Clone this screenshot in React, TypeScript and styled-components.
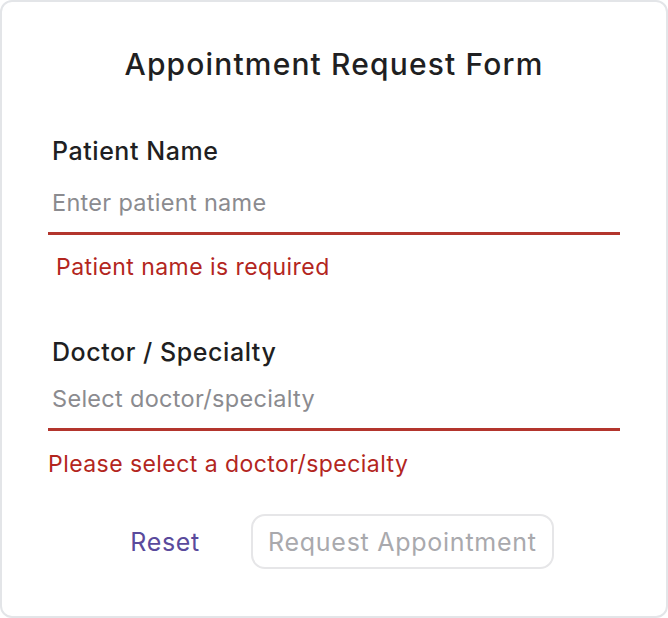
import React from 'react';
import styled, { createGlobalStyle } from 'styled-components';

const GlobalStyle = createGlobalStyle`
  * { box-sizing: border-box; }
  body {
    margin: 0;
    background: #ffffff;
    font-family: Inter, "Noto Sans", sans-serif;
  }
`;

const Card = styled.form`
  width: 668px;
  height: 618px;
  border: 2px solid #e3e5e8;
  border-radius: 12px;
  background: #fff;
  padding: 44px 46px 0 46px;
  display: flex;
  flex-direction: column;
`;

const Title = styled.h1`
  margin: 0;
  font-size: 30px;
  line-height: 36px;
  font-weight: 500;
  letter-spacing: 1.15px;
  color: #1f1f22;
  text-align: center;
`;

const Field = styled.div<{ $gap: number }>`
  display: flex;
  flex-direction: column;
  margin-top: ${(p) => p.$gap}px;
`;

const Label = styled.label`
  padding-left: 4px;
  font-size: 25px;
  line-height: 32px;
  font-weight: 500;
  letter-spacing: 0.55px;
  color: #1f1f22;
`;

const Input = styled.input<{ $gap: number }>`
  margin-top: ${(p) => p.$gap}px;
  width: 100%;
  border: none;
  border-bottom: 3px solid #b3352d;
  border-radius: 0;
  outline: none;
  padding: 0 4px 14px 4px;
  font-family: inherit;
  font-size: 23.5px;
  line-height: 30px;
  letter-spacing: 0.3px;
  color: #1f1f22;
  background: transparent;

  &::placeholder {
    color: #8b8b8f;
  }
`;

const ErrorText = styled.div<{ $indent: number; $gap: number }>`
  margin-top: ${(p) => p.$gap}px;
  padding-left: ${(p) => p.$indent}px;
  font-size: 23px;
  line-height: 30px;
  letter-spacing: 0.44px;
  color: #b3261e;
`;

const Actions = styled.div`
  margin-top: 35px;
  display: flex;
  justify-content: center;
  align-items: center;
  gap: 35px;
`;

const TextButton = styled.button`
  height: 55px;
  border: none;
  background: none;
  padding: 0 16px;
  font-family: inherit;
  font-size: 25px;
  letter-spacing: 0.68px;
  color: #5a4a9c;
  cursor: pointer;
`;

const SubmitButton = styled.button`
  height: 55px;
  padding: 0 15px;
  border: 2px solid #e6e6e8;
  border-radius: 14px;
  background: #fff;
  font-family: inherit;
  font-size: 25px;
  letter-spacing: 0.74px;
  color: #a9a9ad;
`;

export default function App() {
  return (
    <>
      <GlobalStyle />
      <Card onSubmit={(e) => e.preventDefault()}>
        <Title>Appointment Request Form</Title>
        <Field $gap={53}>
          <Label>Patient Name</Label>
          <Input $gap={21} placeholder="Enter patient name" />
          <ErrorText $gap={17} $indent={8}>Patient name is required</ErrorText>
        </Field>
        <Field $gap={54}>
          <Label>Doctor / Specialty</Label>
          <Input $gap={16} placeholder="Select doctor/specialty" />
          <ErrorText $gap={18} $indent={0}>Please select a doctor/specialty</ErrorText>
        </Field>
        <Actions>
          <TextButton type="button">Reset</TextButton>
          <SubmitButton type="submit" disabled>Request Appointment</SubmitButton>
        </Actions>
      </Card>
    </>
  );
}
